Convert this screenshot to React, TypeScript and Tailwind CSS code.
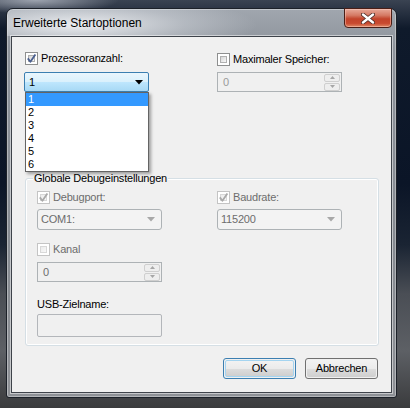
import React from "react";

function Check({ checked, disabled }: { checked?: boolean; disabled?: boolean }) {
  return (
    <span
      className={
        "relative block w-[13px] h-[13px] shrink-0 border bg-white " +
        (disabled ? "border-[#c4c4c4]" : "border-[#8e8f8f]")
      }
    >
      <span
        className={
          "absolute inset-[2px] border " +
          (disabled
            ? "border-[#d8d8d8] bg-gradient-to-br from-[#ececec] to-[#f8f8f8]"
            : "border-[#b0b0b0] bg-gradient-to-br from-[#d6d6d6] to-[#f9f9f9]")
        }
      />
      {checked && (
        <svg className="absolute left-0 top-0" width="11" height="11" viewBox="0 0 11 11">
          <path
            d="M1.8 5.4 L4.4 8.8 L9.4 1.4"
            fill="none"
            stroke={disabled ? "#a9a9a9" : "#4a5f8f"}
            strokeWidth="1.8"
            strokeLinejoin="round"
          />
        </svg>
      )}
    </span>
  );
}

function Label({ children, disabled }: { children: React.ReactNode; disabled?: boolean }) {
  return (
    <span className={"ml-[3px] leading-[13px] " + (disabled ? "text-[#6d6d6d]" : "text-black")}>
      {children}
    </span>
  );
}

function DisabledCombo({ value }: { value: string }) {
  return (
    <div className="flex items-center justify-between w-[125px] h-[21px] rounded-[3px] border border-[#adb2b5] bg-[#f3f3f3] pl-[3px] pr-[6px] text-[#6d6d6d]">
      <span>{value}</span>
      <svg width="8" height="5" viewBox="0 0 8 5">
        <path d="M0 0 H8 L4 4.5 Z" fill="#a8a8a8" />
      </svg>
    </div>
  );
}

function Spin({ value, light }: { value: string; light?: boolean }) {
  return (
    <div className="flex items-center justify-between w-[125px] h-[20px] border border-[#adb2b5] bg-[#f0f0f0] pl-[5px] pr-[1px]">
      <span className={light ? "text-[#9a9a9a]" : "text-[#6d6d6d]"}>{value}</span>
      <div className="flex flex-col gap-[1px]">
        <div className="w-[16px] h-[8px] rounded-[2px] border border-[#cfcfcf] bg-[#eeeeee] flex items-center justify-center">
          <svg width="5" height="3" viewBox="0 0 5 3">
            <path d="M0 3 H5 L2.5 0 Z" fill="#a6a6a6" />
          </svg>
        </div>
        <div className="w-[16px] h-[8px] rounded-[2px] border border-[#cfcfcf] bg-[#eeeeee] flex items-center justify-center">
          <svg width="5" height="3" viewBox="0 0 5 3">
            <path d="M0 0 H5 L2.5 3 Z" fill="#a6a6a6" />
          </svg>
        </div>
      </div>
    </div>
  );
}

function Button({ children, def }: { children: React.ReactNode; def?: boolean }) {
  return (
    <div
      className={
        "w-[73px] h-[21px] rounded-[3px] border p-[1px] " +
        (def ? "border-[#3c7fb1]" : "border-[#707070]")
      }
    >
      <div
        className={
          "w-full h-full rounded-[2px] flex items-center justify-center text-black bg-[linear-gradient(to_bottom,#f2f2f2_0%,#ebebeb_50%,#dddddd_51%,#cfcfcf_100%)] " +
          (def ? "border border-[#a4d4f0]" : "")
        }
      >
        {children}
      </div>
    </div>
  );
}

export default function App() {
  return (
    <div className="relative w-[410px] h-[408px] overflow-hidden font-['Liberation_Sans',Arial,sans-serif] text-[11px] tracking-[-0.2px] bg-[linear-gradient(to_bottom,#3a4352_0%,#0f1a2b_7%,#0b1527_45%,#1a2433_60%,#4a4e55_72%,#5d6065_86%,#3a3b3d_100%)]">
      {/* cloud on the top left */}
      <div className="absolute left-0 top-0 w-[120px] h-[14px] bg-[radial-gradient(ellipse_at_30%_0%,rgba(200,205,215,0.7),transparent_70%)]" />
      {/* window */}
      <div className="absolute left-[6px] top-[8px] w-[391px] h-[390px] rounded-t-[7px] rounded-b-[3px] border border-[#1c2129] bg-[linear-gradient(to_bottom,#a0a6ae_0%,#8d939b_10%,#858a91_60%,#8e9196_100%)] shadow-[inset_0_0_0_1px_rgba(255,255,255,0.35)] flex flex-col">
        {/* title bar */}
        <div className="relative h-[27px] shrink-0 rounded-t-[7px] bg-[radial-gradient(ellipse_180px_30px_at_70px_16px,rgba(240,242,245,0.95),rgba(220,224,230,0.4)_60%,transparent_100%)]">
          <div className="pl-[6px] pt-[7px] text-[12px] tracking-normal leading-[15px] text-black">Erweiterte Startoptionen</div>
          {/* close button */}
          <div className="absolute right-[4px] -top-[1px] w-[48px] h-[20px] rounded-b-[4px] border border-[#4a1e16] bg-[linear-gradient(to_bottom,#e7a898_0%,#d57a64_35%,#c2432a_55%,#c94a30_80%,#e08a66_100%)] shadow-[inset_0_0_0_1px_rgba(255,210,200,0.45)] flex items-center justify-center">
            <svg width="14" height="11" viewBox="0 0 14 11">
              <path d="M2 1.5 L12 9.5 M12 1.5 L2 9.5" stroke="#4a2a25" strokeWidth="4" strokeLinecap="round" />
              <path d="M2 1.5 L12 9.5 M12 1.5 L2 9.5" stroke="#ffffff" strokeWidth="2.4" strokeLinecap="round" />
            </svg>
          </div>
        </div>
        {/* client */}
        <div className="relative mx-[4px] mb-[4px] flex-1 border border-[#3e434a] bg-[#f0f0f0] shadow-[0_0_0_1px_rgba(255,255,255,0.5)]">
          <div className="pl-[12px] pt-[15px]">
            <div className="flex gap-[68px]">
              {/* left column */}
              <div className="relative w-[125px] flex flex-col">
                <div className="ml-[1px] flex items-center">
                  <Check checked />
                  <Label>Prozessoranzahl:</Label>
                </div>
                <div className="mt-[7px] h-[20px] rounded-[2px] border border-[#3c7fb1] bg-[linear-gradient(to_bottom,#eaf6fd_0%,#d9f0fc_50%,#bee6fd_51%,#a7d9f5_100%)] flex items-center justify-between pl-[4px] pr-[5px] text-black">
                  <span>1</span>
                  <svg width="8" height="5" viewBox="0 0 8 5">
                    <path d="M0 0 H8 L4 4.5 Z" fill="#000" />
                  </svg>
                </div>
                {/* dropdown list */}
                <div className="absolute left-[1px] top-[40px] w-[124px] border border-[#646464] bg-white shadow-[2px_2px_3px_rgba(0,0,0,0.35)] z-10">
                  {["1", "2", "3", "4", "5", "6"].map((n, i) => (
                    <div
                      key={n}
                      className={
                        "h-[13px] leading-[13px] pl-[2px] " +
                        (i === 0 ? "bg-[#3399ff] text-white" : "text-black")
                      }
                    >
                      {n}
                    </div>
                  ))}
                </div>
              </div>
              {/* right column */}
              <div className="w-[125px] flex flex-col">
                <div className="mt-[1px] flex items-center">
                  <Check />
                  <Label>Maximaler Speicher:</Label>
                </div>
                <div className="mt-[6px]">
                  <Spin value="0" light />
                </div>
              </div>
            </div>

            {/* group box */}
            <div className="relative ml-[1px] mt-[86px] w-[354px] h-[168px] rounded-[3px] border border-[#d5dfe5] shadow-[inset_0_0_0_1px_#ffffff]">
              <span className="absolute left-[7px] -top-[7px] px-[1px] bg-[#f0f0f0] leading-[13px] text-black">
                Globale Debugeinstellungen
              </span>
              <div className="pl-[11px] pt-[12px] flex flex-col">
                <div className="flex gap-[55px]">
                  <div className="flex flex-col">
                    <div className="flex items-center">
                      <Check checked disabled />
                      <Label disabled>Debugport:</Label>
                    </div>
                    <div className="mt-[5px]">
                      <DisabledCombo value="COM1:" />
                    </div>
                  </div>
                  <div className="flex flex-col">
                    <div className="flex items-center">
                      <Check checked disabled />
                      <Label disabled>Baudrate:</Label>
                    </div>
                    <div className="mt-[5px]">
                      <DisabledCombo value="115200" />
                    </div>
                  </div>
                </div>
                <div className="mt-[13px] flex items-center">
                  <Check disabled />
                  <Label disabled>Kanal</Label>
                </div>
                <div className="mt-[6px]">
                  <Spin value="0" />
                </div>
                <div className="mt-[16px] leading-[13px] text-black">USB-Zielname:</div>
                <div className="mt-[3px] w-[125px] h-[23px] rounded-[2px] border border-[#b3b6ba] bg-[#f0f0f0]" />
              </div>
            </div>

            {/* buttons */}
            <div className="mt-[12px] pr-[13px] flex justify-end gap-[9px]">
              <Button def>OK</Button>
              <Button>Abbrechen</Button>
            </div>
          </div>
        </div>
      </div>
    </div>
  );
}
